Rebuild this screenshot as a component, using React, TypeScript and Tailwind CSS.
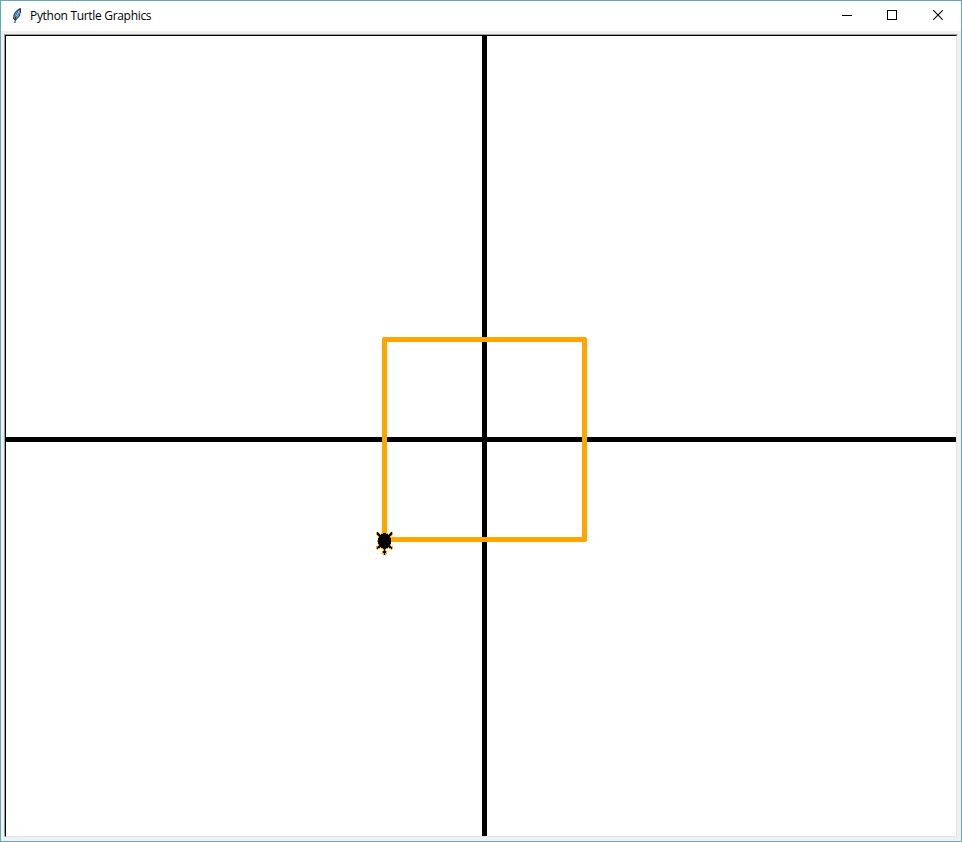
const LIMBS = "M-7-7-3.500-4M7-7 3.500-4M-7 7.500-3.500 4.500M7 7.500 3.500 4.500M0 7V12";

function Feather() {
  return (
    <svg width="10" height="16" viewBox="0 0 10 16" className="block">
      <path d="M8.500.5C5.500 1.200 2 4.800 1.700 8.500L1.700 11 3.400 12C6 10.200 7.300 8.500 7.800 6.500L7.400 6 8.500 4.500Z" fill="#5b92d0" stroke="#172330" strokeWidth=".9" />
      <path d="M7.500 1.500C5 5 3.200 8.500 2.900 15" fill="none" stroke="#101820" strokeWidth=".9" />
      <path d="M7.200 2.500 3.900 8.500" stroke="#a9cdf0" strokeWidth="1" />
    </svg>
  );
}

function TitleBar() {
  return (
    <header className="flex h-[30px] shrink-0 items-center bg-white pl-[11px]">
      <Feather />
      <h1 className="ml-2 grow whitespace-nowrap font-['Open_Sans','Noto_Sans',sans-serif] text-[12px] leading-[16px] tracking-[-0.31px] text-black">
        Python Turtle Graphics
      </h1>
      <div className="flex h-full">
        <button aria-label="Minimize" className="flex w-[45px] justify-center pt-[14px]">
          <svg width="10" height="1" shapeRendering="crispEdges"><path d="M0 0h10v1H0z" /></svg>
        </button>
        <button aria-label="Maximize" className="flex w-[45px] justify-center pt-[9px]">
          <svg width="10" height="10" shapeRendering="crispEdges"><rect x=".5" y=".5" width="9" height="9" fill="none" stroke="#000" /></svg>
        </button>
        <button aria-label="Close" className="flex w-[47px] justify-center pl-[1px] pt-[9px]">
          <svg width="10" height="10"><path d="M.3.3 9.700 9.700M9.700.3.3 9.700" stroke="#000" strokeWidth="1.100" /></svg>
        </button>
      </div>
    </header>
  );
}

function Turtle() {
  return (
    <g transform="translate(384.5 540.5)" strokeLinejoin="round">
      <path d={LIMBS} stroke="#ffa500" strokeWidth="3.600" strokeLinecap="round" />
      <ellipse cy="12" rx="2.500" ry="2.800" fill="#ffa500" />
      <ellipse cy=".5" rx="7.200" ry="8.500" fill="#ffa500" />
      <path d={LIMBS} stroke="#000" strokeWidth="1.900" strokeLinecap="round" />
      <path d="M0 9.500 1.700 12 0 14-1.700 12Z" fill="#000" />
      <ellipse cy=".5" rx="6.500" ry="7.900" fill="#000" />
    </g>
  );
}

function Drawing() {
  return (
    <svg width="950" height="800" viewBox="6 36 950 800" className="block" shapeRendering="crispEdges">
      <path d="M482 36h5v800h-5zM6 437h950v5H6z" fill="#000" />
      <rect x="384.5" y="339.5" width="200" height="200" fill="none" stroke="#ffa500" strokeWidth="5" strokeLinejoin="round" />
      <Turtle />
    </svg>
  );
}

export default function App() {
  return (
    <div className="flex h-[842px] w-[962px] flex-col overflow-hidden border border-[#5fabb9] bg-[#f0f0f0]">
      <TitleBar />
      <main className="mx-[3px] mt-[3px] h-[803px] w-[954px] border border-b-[#f0f0f0] border-l-[#a0a0a0] border-r-[#f0f0f0] border-t-[#a0a0a0]">
        <div className="h-[802px] w-[952px] border border-b-[#e3e3e3] border-l-black border-r-[#e3e3e3] border-t-black bg-white">
          <Drawing />
        </div>
      </main>
    </div>
  );
}
